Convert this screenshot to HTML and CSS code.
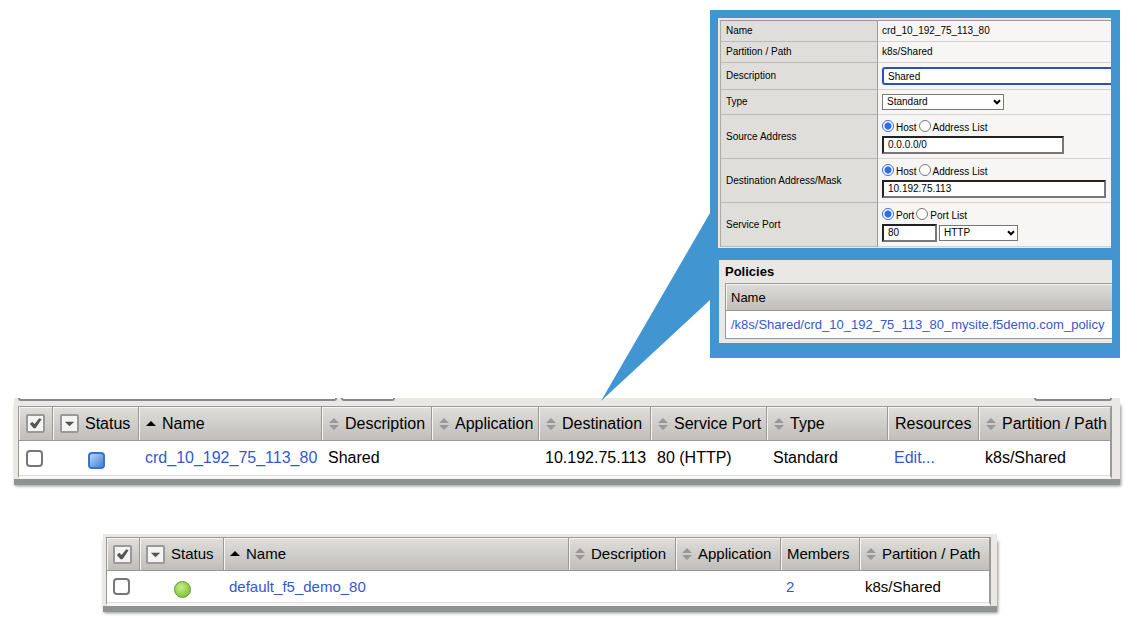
FILE: index.html
```html
<!DOCTYPE html>
<html lang="en">
<head>
<meta charset="utf-8">
<title>Virtual server and pool</title>
<link rel="stylesheet" href="styles.css">
</head>
<body>
<svg class="defs" width="0" height="0" aria-hidden="true">
  <defs>
    <symbol id="sort" viewBox="0 0 10 12"><path d="M5 0 10 5H0zM0 7h10L5 12z" fill="#999"/></symbol>
    <symbol id="asc" viewBox="0 0 10 12"><path d="M5 3 10 8H0z" fill="#000"/></symbol>
    <symbol id="down" viewBox="0 0 16 16"><path d="M3 6h10l-5 5z" fill="#555"/></symbol>
    <symbol id="check" viewBox="0 0 16 16"><path d="M2 8.500 4.500 6 7 8.500 12 2.500 14.500 3.500 8 13H6z" fill="#555"/></symbol>
    <symbol id="chevron" viewBox="0 0 8 6"><path d="M1 1.300 4 4.300 7 1.300" fill="none" stroke="#000" stroke-width="2"/></symbol>
  </defs>
</svg>
<main class="page">
  <section class="callout">
    <svg class="pointer" viewBox="0 0 109 188" aria-hidden="true"><path d="M109 0V87L0 188z" fill="#4196d1"/></svg>
    <form class="form">
      <table class="props">
        <colgroup><col class="col-label"><col></colgroup>
        <tr class="line"><th scope="row">Name</th><td>crd_10_192_75_113_80</td></tr>
        <tr class="line"><th scope="row">Partition / Path</th><td>k8s/Shared</td></tr>
        <tr class="field"><th scope="row"><label for="desc">Description</label></th><td><input class="text focus" id="desc" type="text" value="Shared"></td></tr>
        <tr class="choice"><th scope="row"><label for="type">Type</label></th><td><span class="drop type"><select id="type"><option>Standard</option></select><svg><use href="#chevron"/></svg></span></td></tr>
        <tr class="group"><th scope="row"><label for="src">Source Address</label></th><td>
          <div class="radios"><label><input type="radio" name="s" checked>Host</label><label><input type="radio" name="s">Address List</label></div>
          <input class="text source" id="src" type="text" value="0.0.0.0/0"></td></tr>
        <tr class="group"><th scope="row"><label for="dst">Destination Address/Mask</label></th><td>
          <div class="radios"><label><input type="radio" name="d" checked>Host</label><label><input type="radio" name="d">Address List</label></div>
          <input class="text dest" id="dst" type="text" value="10.192.75.113"></td></tr>
        <tr class="group"><th scope="row"><label for="port">Service Port</label></th><td>
          <div class="radios"><label><input type="radio" name="p" checked>Port</label><label><input type="radio" name="p">Port List</label></div>
          <div class="pair"><input class="text port" id="port" type="text" value="80"><span class="drop service"><select aria-label="Service"><option>HTTP</option></select><svg><use href="#chevron"/></svg></span></div></td></tr>
      </table>
    </form>
    <section class="policies">
      <h2>Policies</h2>
      <table class="policy-table">
        <thead><tr><th scope="col">Name</th></tr></thead>
        <tbody><tr><td><a href="#policy">/k8s/Shared/crd_10_192_75_113_80_mysite.f5demo.com_policy</a></td></tr></tbody>
      </table>
    </section>
  </section>

  <section class="panel servers">
    <div class="toolbar"><span class="edge search"></span><span class="edge find"></span><span class="edge create"></span></div>
    <table class="list">
      <colgroup><col class="w-check"><col class="w-status"><col><col class="w-desc"><col class="w-app"><col class="w-dest"><col class="w-port"><col class="w-type"><col class="w-res"><col class="w-path"></colgroup>
      <thead><tr>
        <th><button type="button" aria-label="Select all"><svg><use href="#check"/></svg></button></th>
        <th><div class="head"><button type="button" aria-label="Filter status"><svg><use href="#down"/></svg></button>Status</div></th>
        <th><div class="head"><svg class="arrow"><use href="#asc"/></svg>Name</div></th>
        <th><div class="head"><svg class="arrow"><use href="#sort"/></svg>Description</div></th>
        <th><div class="head"><svg class="arrow"><use href="#sort"/></svg>Application</div></th>
        <th><div class="head"><svg class="arrow"><use href="#sort"/></svg>Destination</div></th>
        <th><div class="head"><svg class="arrow"><use href="#sort"/></svg>Service Port</div></th>
        <th><div class="head"><svg class="arrow"><use href="#sort"/></svg>Type</div></th>
        <th>Resources</th>
        <th><div class="head"><svg class="arrow"><use href="#sort"/></svg>Partition / Path</div></th>
      </tr></thead>
      <tbody><tr>
        <td class="tick"><input type="checkbox" aria-label="Select crd_10_192_75_113_80"></td>
        <td class="state"><span class="dot square"></span></td>
        <td><a href="#server">crd_10_192_75_113_80</a></td>
        <td>Shared</td><td></td><td>10.192.75.113</td><td>80 (HTTP)</td><td>Standard</td>
        <td><a href="#edit">Edit...</a></td><td>k8s/Shared</td>
      </tr></tbody>
    </table>
  </section>

  <section class="panel pools">
    <table class="list">
      <colgroup><col class="w-check"><col class="w-status"><col><col class="w-desc"><col class="w-app"><col class="w-members"><col class="w-path"></colgroup>
      <thead><tr>
        <th><button type="button" aria-label="Select all"><svg><use href="#check"/></svg></button></th>
        <th><div class="head"><button type="button" aria-label="Filter status"><svg><use href="#down"/></svg></button>Status</div></th>
        <th><div class="head"><svg class="arrow"><use href="#asc"/></svg>Name</div></th>
        <th><div class="head"><svg class="arrow"><use href="#sort"/></svg>Description</div></th>
        <th><div class="head"><svg class="arrow"><use href="#sort"/></svg>Application</div></th>
        <th>Members</th>
        <th><div class="head"><svg class="arrow"><use href="#sort"/></svg>Partition / Path</div></th>
      </tr></thead>
      <tbody><tr>
        <td class="tick"><input type="checkbox" aria-label="Select default_f5_demo_80"></td>
        <td class="state"><span class="dot round"></span></td>
        <td><a href="#pool">default_f5_demo_80</a></td>
        <td></td><td></td><td><a href="#members">2</a></td><td>k8s/Shared</td>
      </tr></tbody>
    </table>
  </section>
</main>
</body>
</html>
```
FILE: styles.css
```css
* { box-sizing: border-box; }
body {
  margin: 0;
  background: #fff;
  color: #000;
  font-family: "Liberation Sans", Arial, sans-serif;
}
.defs { position: absolute; }
input, select, button { font: inherit; color: inherit; margin: 0; }
table { border-collapse: separate; border-spacing: 0; table-layout: fixed; width: 100%; }
th { font-weight: normal; text-align: left; }
a { color: #3558cf; text-decoration: none; }

.page { display: flex; flex-direction: column; padding: 10px 17px 14px 14px; }

/* Callout with the virtual server's properties */
.callout {
  position: relative;
  z-index: 1;
  align-self: flex-end;
  width: 410px;
  padding: 8px 8px 15px;
  background: #4196d1;
  display: flex;
  flex-direction: column;
  gap: 12px;
}
.pointer { position: absolute; right: 100%; top: 203px; width: 109px; height: 188px; }
.form { padding: 2px 0 1px 2px; margin-right: 1px; background: #e9e8e4; overflow: hidden; font-size: 10px; line-height: 12px; }
.props { border-left: 1px solid #aaa; border-top: 1px solid #999; }
.col-label { width: 157px; }
.props th { background: #dfdedb; border-right: 1px solid #999; border-bottom: 1px solid #bbb; padding: 0 5px; }
.props td { background: #f7f6f5; border-bottom: 1px solid #d4d4d2; padding: 0 4px; white-space: nowrap; }
.line { height: 21px; }
.field { height: 27px; }
.choice { height: 25px; }
.group { height: 44px; }
.text {
  display: block;
  height: 18px;
  padding: 0 4px;
  background: #fff;
  border: 2px solid #777;
  border-top-color: #222;
  border-left-color: #222;
  outline: 0;
}
.focus { width: 260px; border-color: #2850c4; border-radius: 3px; }
.source { width: 182px; }
.dest { width: 224px; }
.port { width: 55px; }
.radios { display: flex; gap: 2px; height: 16px; }
.radios label { display: flex; gap: 2px; line-height: 16px; }
.radios input {
  appearance: none;
  width: 12px;
  height: 12px;
  border: 1px solid #777;
  border-radius: 50%;
  background: #fff;
}
.radios input:checked { border-color: #2e6bf0; background: radial-gradient(circle, #2e6bf0 0 3px, #fff 4px); }
.pair { display: flex; align-items: center; gap: 2px; }
.drop { position: relative; display: block; height: 16px; }
.drop select {
  appearance: none;
  display: block;
  width: 100%;
  height: 16px;
  padding: 0 4px;
  border: 1px solid #777;
  border-radius: 0;
  background: #fff;
  line-height: 12px;
}
.drop svg { position: absolute; right: 3px; top: 5px; width: 8px; height: 6px; pointer-events: none; }
.type { width: 122px; }
.service { width: 79px; }

.policies { margin-left: 1px; padding: 4px 0 4px 6px; background: #e9e8e4; font-size: 13px; }
.policies h2 { margin: 0 0 3px; font-size: 13px; line-height: 16px; }
.policy-table { border: solid #999; border-width: 1px 0 1px 1px; white-space: nowrap; }
.policy-table th {
  height: 27px;
  padding: 0 5px;
  background: linear-gradient(#dddcd9, #bfbeba);
  border-bottom: 1px solid #999;
  box-shadow: inset 1px 1px #f5f5f3;
}
.policy-table td { height: 27px; padding: 0 0 0 5px; background: #fff; }

/* List panels */
.panel {
  background: #e9e8e4;
  box-shadow: 0 6px 0 #909392, 1px 7px 3px rgba(0, 0, 0, 0.45);
  font-size: 16px;
  line-height: 20px;
}
.servers { margin-top: 40px; padding: 0 8px 0 4px; }
.pools { margin: 55px 123px 0 89px; padding: 3px 6px 0 3px; font-size: 15px; }
.toolbar { display: flex; height: 8px; gap: 4px; }
.edge { height: 3px; background: #fff; border: 2px solid #888; border-top: 0; border-radius: 0 0 3px 3px; }
.search { width: 319px; }
.find { width: 54px; }
.create { width: 78px; margin-left: auto; }
.list { border: solid #999; border-width: 1px 2px 0 1px; }
.list th, .list td { white-space: nowrap; }
.list th {
  height: 34px;
  padding: 0 0 0 7px;
  background: linear-gradient(#dfdedb, #bfbeba);
  border-bottom: 1px solid #999;
  border-right: 1px solid #999;
  box-shadow: inset 1px 1px #f5f5f3;
}
.list th:last-child { border-right: 0; }
.list td { height: 35px; padding: 0 0 0 6px; background: #fff; border-bottom: 1px solid #ddd; }
.list { border-bottom: 3px solid #f7f7f5; }
.head { display: flex; align-items: center; gap: 6px; }
.arrow { width: 10px; height: 12px; flex: none; }
.list button {
  display: block;
  flex: none;
  width: 19px;
  height: 19px;
  padding: 0;
  border: 2px solid #999;
  border-radius: 2px;
  background: #f4f4f3;
}
.list button svg { display: block; width: 15px; height: 15px; }
.list .tick { padding-left: 7px; }
.tick input {
  appearance: none;
  display: block;
  width: 17px;
  height: 17px;
  border: 2px solid #777;
  border-radius: 4px;
  background: #fff;
}
.list .state { padding: 5px 0 0; }
.dot { display: block; width: 17px; height: 17px; margin: 0 auto; }
.square { border: 2px solid #3b73c5; border-radius: 4px; background: linear-gradient(135deg, #b9d5f7, #4181d8); }
.round { border: 1px solid #5f982e; border-radius: 50%; background: radial-gradient(circle at 40% 35%, #c9ec87, #84c33d 75%); }
.w-check { width: 34px; }
.w-status { width: 86px; }
.w-desc { width: 110px; }
.w-app { width: 107px; }
.w-dest { width: 112px; }
.w-port { width: 116px; }
.w-type { width: 121px; }
.w-res { width: 91px; }
.w-path { width: 131px; }
.w-members { width: 79px; }
.pools .w-check { width: 33px; }
.pools .w-status { width: 84px; }
.pools .w-desc { width: 107px; }
.pools .w-app { width: 105px; }
.pools .w-path { width: 129px; }
.pools .list th { height: 33px; padding-left: 6px; }
.pools .list td { height: 32px; padding-left: 5px; }
.pools .list .tick { padding-left: 6px; }
.pools .list .state { padding-left: 0; }
```
